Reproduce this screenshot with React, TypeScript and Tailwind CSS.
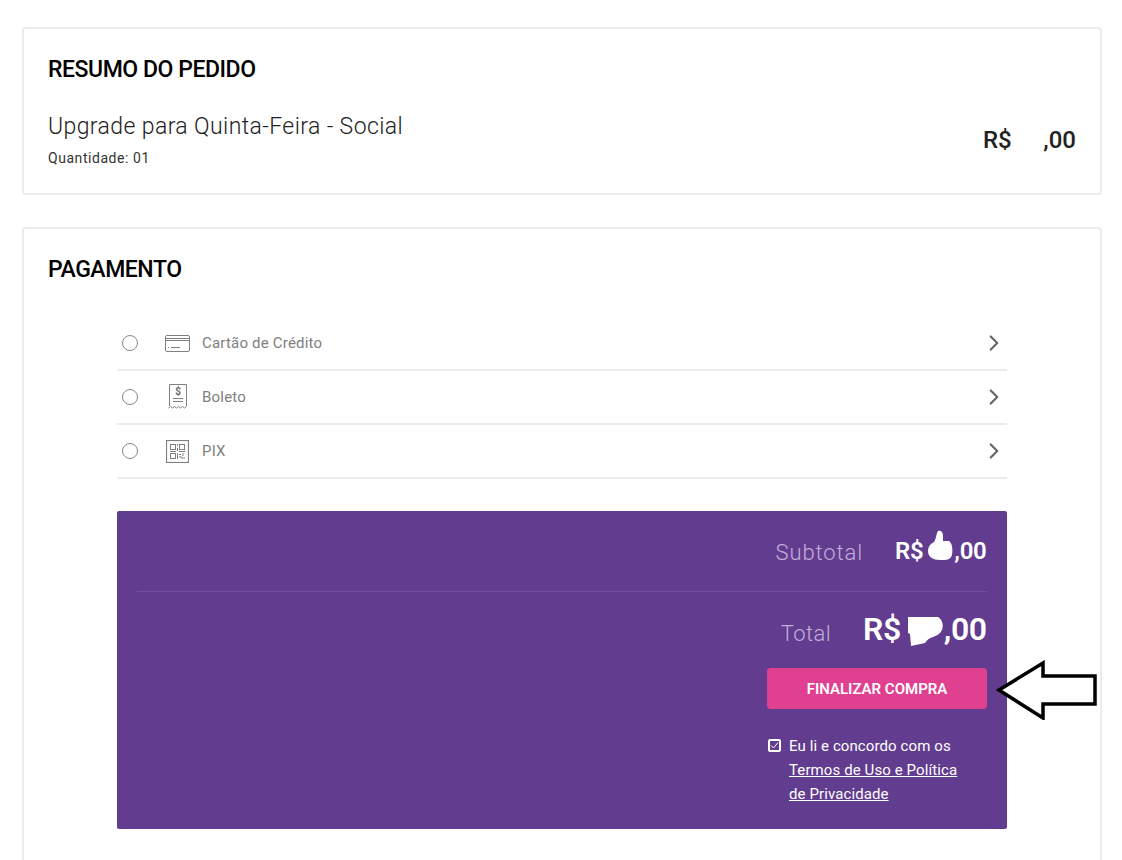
import React from 'react';
import { ChevronRight } from 'lucide-react';

const font = { fontFamily: 'Roboto, "Liberation Sans", sans-serif' };

function CardIcon() {
    return (
        <svg width="25" height="17" viewBox="0 0 25 17" fill="none" stroke="#808080" strokeWidth="1">
            <rect x="0.5" y="0.5" width="24" height="16" rx="1.5" />
            <path d="M1 3.5h23M1 5.5h23" />
            <path d="M3 12.5h1M6 12.5h9" />
        </svg>
    );
}

function BoletoIcon() {
    return (
        <svg width="20" height="26" viewBox="0 0 20 26" fill="none" stroke="#808080" strokeWidth="1">
            <path d="M1.5 22V0.5h17V22" />
            <path d="M0.5 24l2-1.5 2 1.5 2-1.5 2 1.5 2-1.5 2 1.5 2-1.5 2 1.5 2-1.5" />
            <path d="M5 14.5h10M5 17.5h10" />
            <text x="10" y="11" textAnchor="middle" fontSize="10" fontWeight="700" fill="#666" stroke="none">$</text>
        </svg>
    );
}

function QrIcon() {
    return (
        <svg width="23" height="23" viewBox="0 0 23 23" fill="none" stroke="#808080" strokeWidth="1">
            <rect x="0.5" y="0.5" width="22" height="22" strokeWidth="1.2" />
            <rect x="4.5" y="4.5" width="5" height="5" />
            <rect x="4.5" y="13.5" width="5" height="5" />
            <rect x="13.5" y="4.5" width="5" height="5" />
            <path d="M11.5 4v2M11.5 8v3M4 11.5h6M13 11.5h6M13 14.5h2M17 13v3M13 17h3v2M18 17v2M11.5 13v6" />
        </svg>
    );
}

function Arrow() {
    return (
        <svg className="absolute left-[996px] top-[660px]" width="102" height="60" viewBox="0 0 102 60" fill="white" stroke="black" strokeWidth="3.5">
            <path d="M3 30L47 3V16H99V44H47V58Z" />
        </svg>
    );
}

const methods = [
    { label: 'Cartão de Crédito', icon: <CardIcon /> },
    { label: 'Boleto', icon: <BoletoIcon /> },
    { label: 'PIX', icon: <QrIcon /> },
];

export default function App() {
    return (
        <main className="relative h-[860px] overflow-hidden bg-white pr-[20px] pl-[22px] pt-[27px] text-black" style={font}>
            {/* Resumo */}
            <section className="h-[168px] rounded border-2 border-[#ebebeb] px-[24px] pt-[25px]">
                <h2 className="text-[23px] leading-[32px] font-medium tracking-[-0.45px] text-black">RESUMO DO PEDIDO</h2>
                <div className="mt-[25px] flex items-center justify-between">
                    <div>
                        <p className="text-[23px] leading-[32px] font-light tracking-[0.4px] text-[#222]">Upgrade para Quinta-Feira - Social</p>
                        <p className="mt-[5px] text-[14px] leading-[20px] tracking-[0.55px] text-[#333]">Quantidade: 01</p>
                    </div>
                    <div className="flex w-[93px] justify-between text-[24px] leading-[32px] font-medium text-[#222]">
                        <span>R$</span>
                        <span>,00</span>
                    </div>
                </div>
            </section>

            {/* Pagamento */}
            <section className="mt-[32px] h-[700px] rounded border-2 border-[#ebebeb] px-[24px] pt-[25px]">
                <h2 className="text-[23px] leading-[32px] font-medium tracking-[-0.45px] text-black">PAGAMENTO</h2>
                <div className="mx-[69px] mt-[31px]">
                    {methods.map((m) => (
                        <div key={m.label} className="flex h-[54px] items-center border-b-2 border-[#ebebeb] text-[#808080]">
                            <span className="ml-[5px] h-[16px] w-[16px] rounded-full border border-[#888]" />
                            <span className="ml-[21px] flex w-[37px] justify-center">{m.icon}</span>
                            <span className="ml-[6px] flex-1 text-[15px] tracking-[0.2px]">{m.label}</span>
                            <ChevronRight className="h-[26px] w-[26px] text-[#666]" strokeWidth={2} />
                        </div>
                    ))}
                </div>

                <div className="mx-[69px] mt-[32px] h-[318px] rounded-[2px] bg-[#623c8e] px-[20px] text-white">
                    <div className="flex h-[81px] items-center justify-end gap-[32px] border-b border-[#7550a1]">
                        <span className="mt-[2px] text-[22px] font-light tracking-[0.9px] text-[#c3afd9]">Subtotal</span>
                        <span className="relative w-[92px] text-[24px] font-semibold tracking-[-0.3px] whitespace-nowrap">
                            R$<span className="ml-[31px]">,00</span>
                            <svg className="absolute left-[32px] top-[-3px]" width="26" height="34" viewBox="0 0 26 34" fill="white">
                                <path d="M7 12C9 10 9 4 11 1c3-1 5 1 5 5v5h6c3 2 4 8 3 14-2 5-5 5-12 5-7 0-12-3-12-9 0-4 2-7 6-9z" />
                            </svg>
                        </span>
                    </div>
                    <div className="flex h-[76px] items-center justify-end gap-[32px]">
                        <span className="mt-[6px] text-[22px] font-light tracking-[0.4px] text-[#c3afd9]">Total</span>
                        <span className="relative mb-[2px] w-[124px] text-[32px] font-semibold tracking-[-0.4px] whitespace-nowrap">
                            R$<span className="ml-[43px]">,00</span>
                            <svg className="absolute left-[44px] top-[11px]" width="37" height="31" viewBox="0 0 37 31" fill="white">
                                <path d="M1 1h30c4 2 6 8 4 13-2 4-6 6-9 7-4 1-6 3-8 6l-14 3-1-12-2-1z" />
                            </svg>
                        </span>
                    </div>
                    <div className="flex justify-end">
                        <button className="h-[41px] w-[220px] rounded bg-[#e04090] pt-[2px] text-[15px] font-semibold text-white">FINALIZAR COMPRA</button>
                    </div>
                    <div className="mt-[25px] flex justify-end">
                        <div className="flex w-[220px]">
                            <span className="mt-[5px] ml-[1px] flex h-[13px] w-[13px] shrink-0 items-center justify-center rounded-[2px] border-2 border-white">
                                <svg width="9" height="9" viewBox="0 0 9 9" fill="none" stroke="white" strokeWidth="1">
                                    <path d="M1 4.5l2.5 2.5 4.5-5.5" />
                                </svg>
                            </span>
                            <p className="ml-[8px] text-[15px] leading-[24px] tracking-[0.1px] text-white">
                                Eu li e concordo com os<br />
                                <a className="underline">Termos de Uso e Política</a><br />
                                <a className="underline">de Privacidade</a>
                            </p>
                        </div>
                    </div>
                </div>
            </section>

            <Arrow />
        </main>
    );
}
